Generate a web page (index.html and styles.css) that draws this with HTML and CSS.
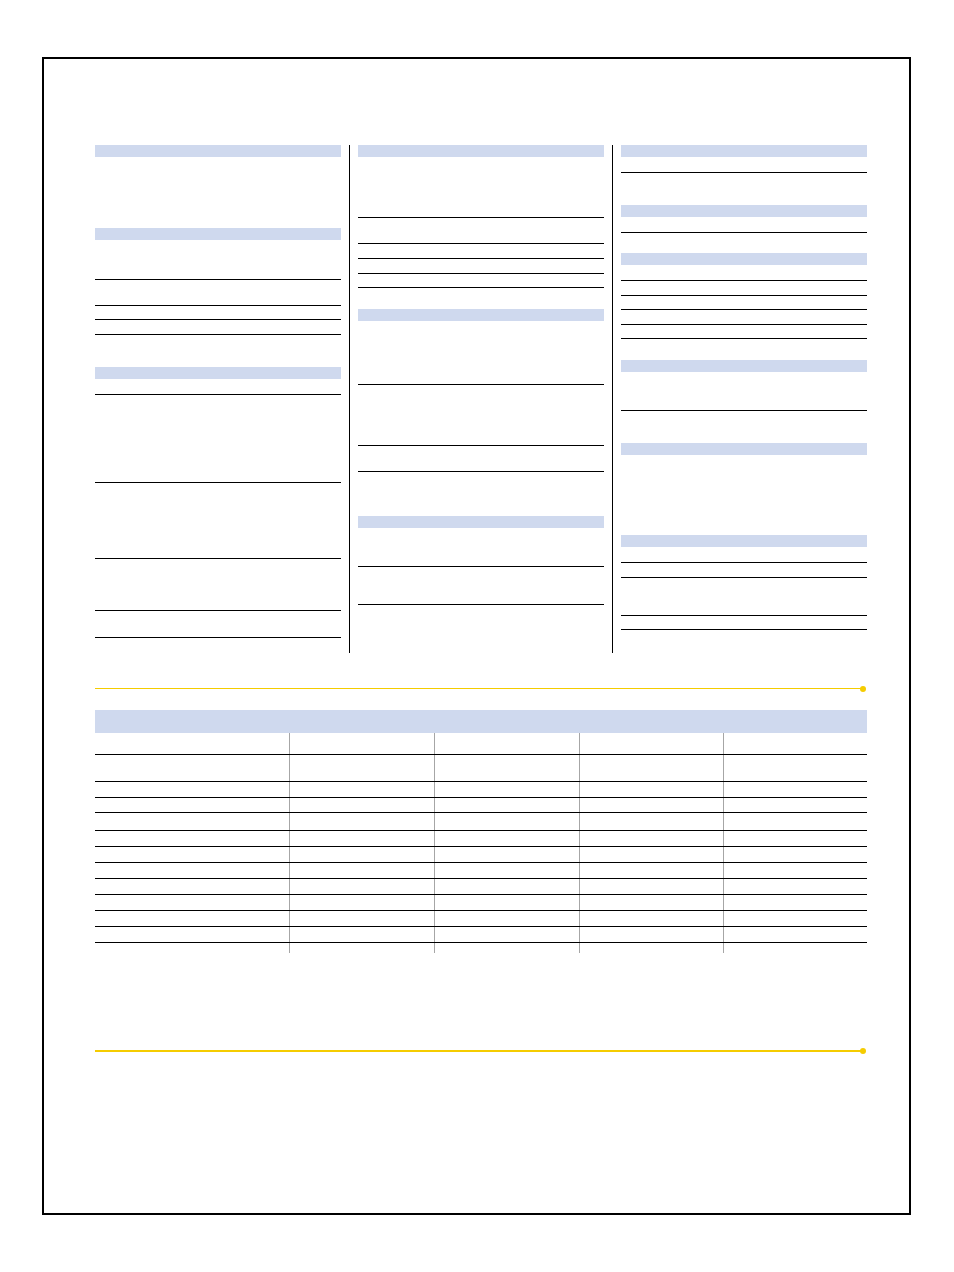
FILE: index.html
```html
<!DOCTYPE html>
<html lang="en">
<head>
<meta charset="utf-8">
<title>Form layout</title>
<link rel="stylesheet" href="styles.css">
</head>
<body>
<div class="page">
  <div class="columns">
    <div class="col">
      <div class="bar"></div>
      <div class="sp sp71"></div>
      <div class="bar"></div>
      <div class="row r39"></div>
      <div class="row r25"></div>
      <div class="row r13"></div>
      <div class="row r14"></div>
      <div class="sp sp32"></div>
      <div class="bar"></div>
      <div class="row r15"></div>
      <div class="row r87"></div>
      <div class="row r75"></div>
      <div class="row r51"></div>
      <div class="row r26"></div>
    </div>
    <div class="col divided">
      <div class="bar"></div>
      <div class="row r60"></div>
      <div class="row r25"></div>
      <div class="row r14"></div>
      <div class="row r14"></div>
      <div class="row r13"></div>
      <div class="sp sp21"></div>
      <div class="bar"></div>
      <div class="row r63"></div>
      <div class="row r60"></div>
      <div class="row r25"></div>
      <div class="sp sp44"></div>
      <div class="bar"></div>
      <div class="row r38"></div>
      <div class="row r37"></div>
    </div>
    <div class="col divided">
      <div class="bar"></div>
      <div class="row r15"></div>
      <div class="sp sp32"></div>
      <div class="bar"></div>
      <div class="row r15"></div>
      <div class="sp sp20"></div>
      <div class="bar"></div>
      <div class="row r15"></div>
      <div class="row r14"></div>
      <div class="row r13"></div>
      <div class="row r14"></div>
      <div class="row r13"></div>
      <div class="sp sp21"></div>
      <div class="bar"></div>
      <div class="row r38"></div>
      <div class="sp sp32"></div>
      <div class="bar"></div>
      <div class="sp sp80"></div>
      <div class="bar"></div>
      <div class="row r15"></div>
      <div class="row r14"></div>
      <div class="row r37"></div>
      <div class="row r13"></div>
    </div>
  </div>

  <div class="rule rule-thin"></div>

  <div class="table">
    <div class="thead"></div>
    <div class="trow t21"><div class="cell"></div><div class="cell"></div><div class="cell"></div><div class="cell"></div><div class="cell"></div></div>
    <div class="trow t26"><div class="cell"></div><div class="cell"></div><div class="cell"></div><div class="cell"></div><div class="cell"></div></div>
    <div class="trow t15"><div class="cell"></div><div class="cell"></div><div class="cell"></div><div class="cell"></div><div class="cell"></div></div>
    <div class="trow t14"><div class="cell"></div><div class="cell"></div><div class="cell"></div><div class="cell"></div><div class="cell"></div></div>
    <div class="trow t17"><div class="cell"></div><div class="cell"></div><div class="cell"></div><div class="cell"></div><div class="cell"></div></div>
    <div class="trow t15"><div class="cell"></div><div class="cell"></div><div class="cell"></div><div class="cell"></div><div class="cell"></div></div>
    <div class="trow t15"><div class="cell"></div><div class="cell"></div><div class="cell"></div><div class="cell"></div><div class="cell"></div></div>
    <div class="trow t15"><div class="cell"></div><div class="cell"></div><div class="cell"></div><div class="cell"></div><div class="cell"></div></div>
    <div class="trow t15"><div class="cell"></div><div class="cell"></div><div class="cell"></div><div class="cell"></div><div class="cell"></div></div>
    <div class="trow t15"><div class="cell"></div><div class="cell"></div><div class="cell"></div><div class="cell"></div><div class="cell"></div></div>
    <div class="trow t15"><div class="cell"></div><div class="cell"></div><div class="cell"></div><div class="cell"></div><div class="cell"></div></div>
    <div class="trow t15"><div class="cell"></div><div class="cell"></div><div class="cell"></div><div class="cell"></div><div class="cell"></div></div>
    <div class="trow t10 last"><div class="cell"></div><div class="cell"></div><div class="cell"></div><div class="cell"></div><div class="cell"></div></div>
  </div>

  <div class="rule rule-thick"></div>
</div>
</body>
</html>
```

FILE: styles.css
```css
* { box-sizing: border-box; }

html, body {
  margin: 0;
  padding: 0;
  background: #ffffff;
  font-family: "Liberation Sans", Arial, sans-serif;
}

.page {
  width: 869px;
  height: 1158px;
  margin: 57px 0 0 42px;
  border: 2px solid #000;
  padding: 86px 42px 0 51px;
  display: flex;
  flex-direction: column;
}

/* three columns */
.columns {
  display: flex;
  height: 508px;
  width: 772px;
}

.col {
  width: 246px;
  display: flex;
  flex-direction: column;
  flex: none;
}

.col.divided {
  width: 263px;
  margin-left: 8px;
  padding-left: 8px;
  border-left: 1px solid #000;
  margin-right: 0;
}
.col.divided { width: 255px; }

.bar {
  height: 12px;
  background: #cfd9ee;
  flex: none;
}

.row {
  border-bottom: 1px solid #000;
  flex: none;
}

.sp { flex: none; }

.r13 { height: 14px; }
.r14 { height: 15px; }
.r15 { height: 16px; }
.r25 { height: 26px; }
.r26 { height: 27px; }
.r37 { height: 38px; }
.r38 { height: 39px; }
.r39 { height: 40px; }
.r51 { height: 52px; }
.r60 { height: 61px; }
.r63 { height: 64px; }
.r75 { height: 76px; }
.r87 { height: 88px; }

.sp20 { height: 20px; }
.sp21 { height: 21px; }
.sp32 { height: 32px; }
.sp44 { height: 44px; }
.sp71 { height: 71px; }
.sp80 { height: 80px; }

/* yellow rules with end dot */
.rule {
  position: relative;
  width: 768px;
  background: #f5cc00;
  flex: none;
}
.rule::after {
  content: "";
  position: absolute;
  right: -3px;
  top: 50%;
  width: 6px;
  height: 6px;
  margin-top: -3px;
  border-radius: 50%;
  background: #f5cc00;
}
.rule-thin {
  height: 1px;
  margin-top: 35px;
}
.rule-thick {
  height: 2px;
  margin-top: 97px;
}

/* table */
.table {
  width: 772px;
  margin-top: 21px;
  flex: none;
}

.thead {
  height: 23px;
  background: #cfd9ee;
}

.trow {
  display: grid;
  grid-template-columns: 194px 145px 145px 144px 144px;
  border-bottom: 1px solid #000;
}
.trow.last { border-bottom: none; }

.cell + .cell {
  border-left: 1px solid #a6a6a6;
}

.t10 { height: 10px; }
.t14 { height: 15px; }
.t15 { height: 16px; }
.t17 { height: 18px; }
.t21 { height: 22px; }
.t26 { height: 27px; }
```
